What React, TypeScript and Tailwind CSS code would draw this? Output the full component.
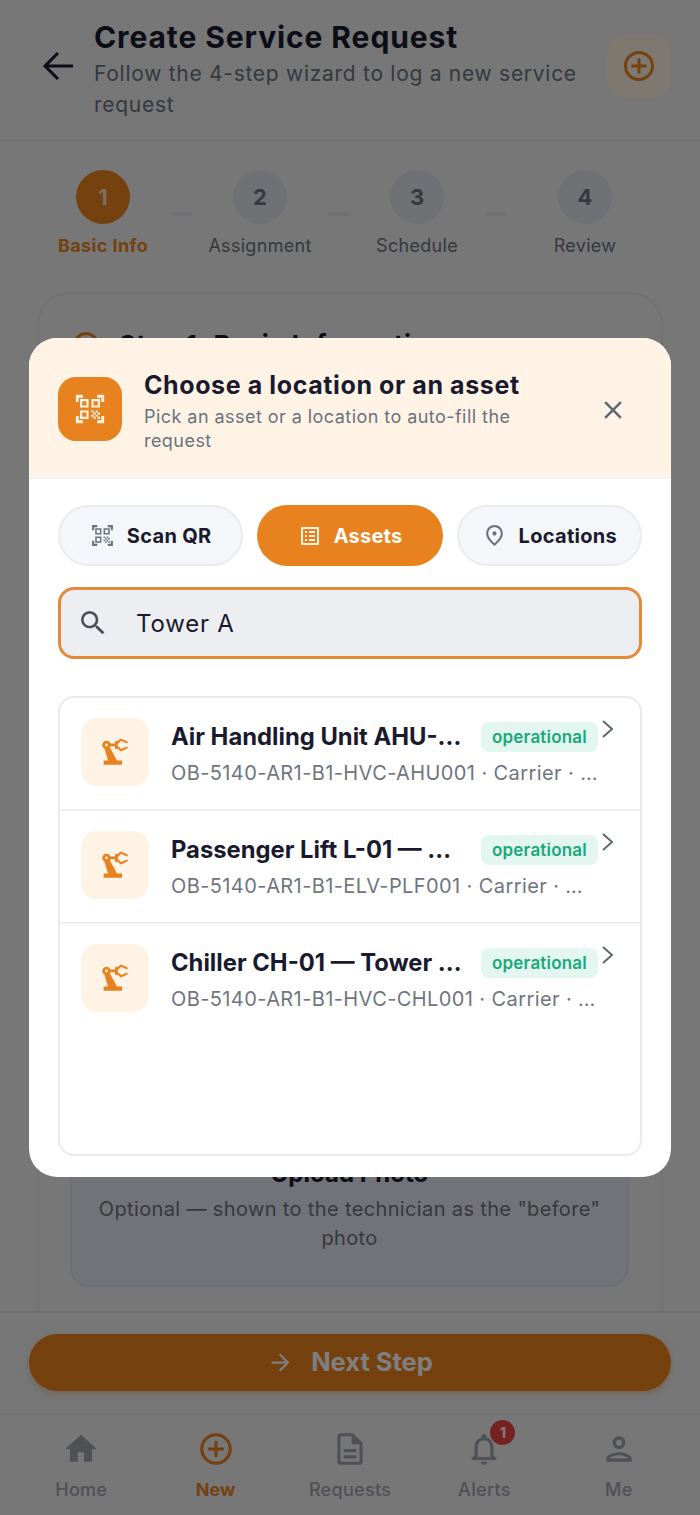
import {
  MdArrowForward,
  MdClose,
  MdHome,
  MdOutlineAddCircleOutline,
  MdOutlineDescription,
  MdOutlineListAlt,
  MdOutlineNotifications,
  MdOutlinePerson,
  MdOutlinePlace,
  MdPrecisionManufacturing,
  MdQrCodeScanner,
  MdSearch,
} from "react-icons/md";

const steps = [
  { n: "1", label: "Basic Info", active: true },
  { n: "2", label: "Assignment" },
  { n: "3", label: "Schedule" },
  { n: "4", label: "Review" },
];

const assets = [
  { name: "Air Handling Unit AHU-01 — Tower A", code: "OB-5140-AR1-B1-HVC-AHU001 · Carrier · Basement 1" },
  { name: "Passenger Lift L-01 — Tower A", code: "OB-5140-AR1-B1-ELV-PLF001 · Carrier · Warehouse" },
  { name: "Chiller CH-01 — Tower A Plant", code: "OB-5140-AR1-B1-HVC-CHL001 · Carrier · Basement 1" },
];

const navItems = [
  { label: "Home", Icon: MdHome },
  { label: "New", Icon: MdOutlineAddCircleOutline, active: true },
  { label: "Requests", Icon: MdOutlineDescription },
  { label: "Alerts", Icon: MdOutlineNotifications, badge: "1" },
  { label: "Me", Icon: MdOutlinePerson },
];

const Page = () => (
  <div className="flex h-full flex-col bg-[#eeeeef]">
    <header className="flex h-[141px] shrink-0 items-center border-b border-[#dfe1e6] pb-[8px] pl-[42px] pr-[29px]">
      <svg viewBox="0 0 34 30" fill="none" stroke="#1a1a2e" strokeWidth="3" className="mr-[18px] h-[30px] w-[34px] shrink-0">
        <path d="M16 2 L3 15 L16 28 M3 15 H31" />
      </svg>
      <div className="mt-[5px] w-[490px] shrink-0">
        <h1 className="text-[30px] leading-[38px] font-bold tracking-[0.9px] text-[#1a1a2e]">Create Service Request</h1>
        <p className="mt-[2px] text-[21px] leading-[31px] tracking-[0.72px] text-[#6b7280]">
          Follow the 4-step wizard to log a new service request
        </p>
      </div>
      <div className="ml-auto flex size-[64px] items-center justify-center rounded-[18px] bg-[#fdf0e2]">
        <MdOutlineAddCircleOutline className="size-[36px] text-[#e8821f]" />
      </div>
    </header>

    <div className="flex shrink-0 pt-[29px] pl-[48px]">
      {steps.map((s, i) => (
        <div key={s.n} className="flex items-start">
          <div className="flex w-[110px] flex-col items-center">
            <div
              className={
                s.active
                  ? "flex size-[54px] items-center justify-center rounded-full bg-[#e8821f] text-[22px] font-bold text-[#f8dcc0]"
                  : "flex size-[54px] items-center justify-center rounded-full bg-[#dfe2e8] text-[22px] font-bold text-[#6b7280]"
              }
            >
              {s.n}
            </div>
            <span
              className={
                s.active
                  ? "mt-[10px] text-[18px] leading-[24px] font-bold tracking-[0.4px] whitespace-nowrap text-[#e8821f]"
                  : "mt-[10px] text-[18px] leading-[24px] tracking-[0.3px] whitespace-nowrap text-[#6b7280]"
              }
            >
              {s.label}
            </span>
          </div>
          {i < 3 && <div className="mt-[42px] ml-[13px] h-[4px] w-[22px] rounded bg-[#dfe2e8]" />}
          {i < 2 && <div className="w-[12px]" />}
          {i === 2 && <div className="w-[23px]" />}
        </div>
      ))}
    </div>

    <div className="mt-[34px] min-h-0 flex-1 overflow-hidden px-[37px]">
      <div className="h-[1100px] rounded-t-[32px] border-2 border-b-0 border-[#e1e3e8] pt-[36px] pr-[32px] pl-[31px]">
        <div className="flex items-center gap-[20px]">
          <span className="ml-[3px] size-[26px] rounded-full border-[3px] border-[#e8821f]" />
          <span className="text-[26px] leading-[30px] font-bold tracking-[0.5px] text-[#1a1a2e]">Step 1: Basic Information</span>
        </div>
        <div className="mt-[747px] flex h-[180px] flex-col items-center justify-end rounded-[20px] border-2 border-[#d8deea] bg-[#e3e7f0] px-[16px] pb-[32px]">
          <p className="text-[24px] leading-[30px] font-bold text-[#1a1a2e]">Upload Photo</p>
          <p className="mt-[6px] text-center text-[20px] leading-[29px] tracking-[0.36px] text-[#6b7280]">
            Optional — shown to the technician as the "before" photo
          </p>
        </div>
      </div>
    </div>

    <div className="shrink-0 border-t-2 border-[#e1e3e8] px-[29px] pt-[21px] pb-[22px]">
      <button className="flex h-[57px] w-full items-center justify-center gap-[17px] rounded-full bg-[#e8821f] text-[25.5px] font-bold text-[#ffffff] shadow-[0_3px_6px_rgba(232,130,31,0.35)]">
        <MdArrowForward className="size-[27px]" />
        Next Step
      </button>
    </div>

    <nav className="flex h-[102px] shrink-0 border-t-2 border-[#e7e8ec] px-[14px] pt-[15px]">
      {navItems.map(({ label, Icon, active, badge }) => (
        <div key={label} className="flex flex-1 flex-col items-center">
          <div className="relative">
            <Icon className={active ? "size-[38px] text-[#e8821f]" : "size-[38px] text-[#9ea3ad]"} />
            {badge && (
              <span className="absolute -top-[10px] -right-[12px] flex size-[25px] items-center justify-center rounded-full bg-[#ef4444] text-[14px] font-bold text-[#ffffff]">
                {badge}
              </span>
            )}
          </div>
          <span
            className={
              active
                ? "mt-[10px] text-[18px] leading-[24px] font-bold text-[#e8821f]"
                : "mt-[10px] text-[18px] leading-[24px] font-medium tracking-[0.3px] text-[#9ea3ad]"
            }
          >
            {label}
          </span>
        </div>
      ))}
    </nav>
  </div>
);

const Tab = ({ label, Icon, active }: { label: string; Icon: typeof MdSearch; active?: boolean }) => (
  <div
    className={
      active
        ? "flex h-[61px] items-center justify-center gap-[12px] rounded-full bg-[#e8821f] text-[20px] font-bold tracking-[0.2px] text-[#ffffff]"
        : "flex h-[61px] items-center justify-center gap-[12px] rounded-full border-2 border-[#e9ebef] bg-[#f4f6fa] text-[20px] font-bold tracking-[0.3px] text-[#1a1a2e]"
    }
  >
    <Icon className={active ? "size-[24px] text-[#fff3e6]" : "size-[25px] text-[#6b7280]"} />
    {label}
  </div>
);

const Modal = () => (
  <div className="flex h-[839px] w-[642px] flex-col overflow-hidden rounded-[28px] bg-white">
    <div className="flex h-[141px] shrink-0 items-center border-b-2 border-[#f3f4f6] bg-[#fff3e6] pt-[2px] pr-[43px] pl-[29px]">
      <div className="flex size-[64px] shrink-0 items-center justify-center rounded-[18px] bg-[#e8821f]">
        <MdQrCodeScanner className="size-[34px] text-[#fff3e6]" />
      </div>
      <div className="mt-[4px] ml-[22px] w-[390px] flex-1">
        <h2 className="text-[25px] leading-[32px] font-bold tracking-[0.6px] text-[#1a1a2e]">Choose a location or an asset</h2>
        <p className="mt-[4px] w-[385px] text-[18px] leading-[24px] tracking-[0.45px] text-[#6b7280]">
          Pick an asset or a location to auto-fill the request
        </p>
      </div>
      <MdClose className="mt-[2px] size-[30px] shrink-0 text-[#5f6874]" />
    </div>

    <div className="flex min-h-0 flex-1 flex-col px-[29px] pt-[26px] pb-[21px]">
      <div className="grid grid-cols-3 gap-[14px]">
        <Tab label="Scan QR" Icon={MdQrCodeScanner} />
        <Tab label="Assets" Icon={MdOutlineListAlt} active />
        <Tab label="Locations" Icon={MdOutlinePlace} />
      </div>

      <div className="mt-[21px] flex h-[72px] shrink-0 items-center rounded-[16px] border-[3px] border-[#e58a3b] bg-[#eceef1] pl-[16px]">
        <MdSearch className="size-[32px] text-[#4b4f55]" />
        <span className="mt-[1px] ml-[27px] text-[24px] tracking-[0.8px] text-[#1a1a2e]">Tower A</span>
      </div>

      <div className="mt-[37px] min-h-0 flex-1 overflow-hidden rounded-[16px] border-2 border-[#e9ebef]">
        {assets.map((a) => (
          <div
            key={a.code}
            className="flex h-[113px] items-start border-b-2 border-[#eef0f3] pt-[20px] pl-[21px] last:border-b-0"
          >
            <div className="flex size-[68px] shrink-0 items-center justify-center rounded-[16px] bg-[#fff3e6]">
              <MdPrecisionManufacturing className="size-[34px] text-[#e8821f]" />
            </div>
            <div className="mt-[1px] ml-[22px] w-[429px] min-w-0">
              <div className="flex items-center pr-[2px]">
                <span className="min-w-0 flex-1 truncate pr-[17px] text-[23.8px] leading-[36px] font-bold text-[#1a1a2e]">
                  {a.name}
                </span>
                <span className="flex h-[30px] w-[117px] shrink-0 items-center justify-center rounded-[8px] bg-[#e3f6ef] pt-[1px] text-[17px] font-semibold tracking-[0.2px] text-[#1aa97c]">
                  operational
                </span>
              </div>
              <p className="mt-[4px] truncate text-[20px] leading-[28px] tracking-[0.4px] text-[#6f7580]">{a.code}</p>
            </div>
            <svg viewBox="0 0 13 20" fill="none" stroke="#5f6874" strokeWidth="2" className="mt-[1px] ml-[1px] h-[20px] w-[13px] shrink-0">
              <path d="M2 2 L11 10 L2 18" />
            </svg>
          </div>
        ))}
      </div>
    </div>
  </div>
);

export default function App() {
  return (
    <div
      className="relative h-[1515px] w-[700px] overflow-hidden"
      style={{ fontFamily: "Inter, 'Noto Sans', sans-serif" }}
    >
      <Page />
      <div className="absolute inset-0 flex items-center justify-center bg-black/50">
        <Modal />
      </div>
    </div>
  );
}
